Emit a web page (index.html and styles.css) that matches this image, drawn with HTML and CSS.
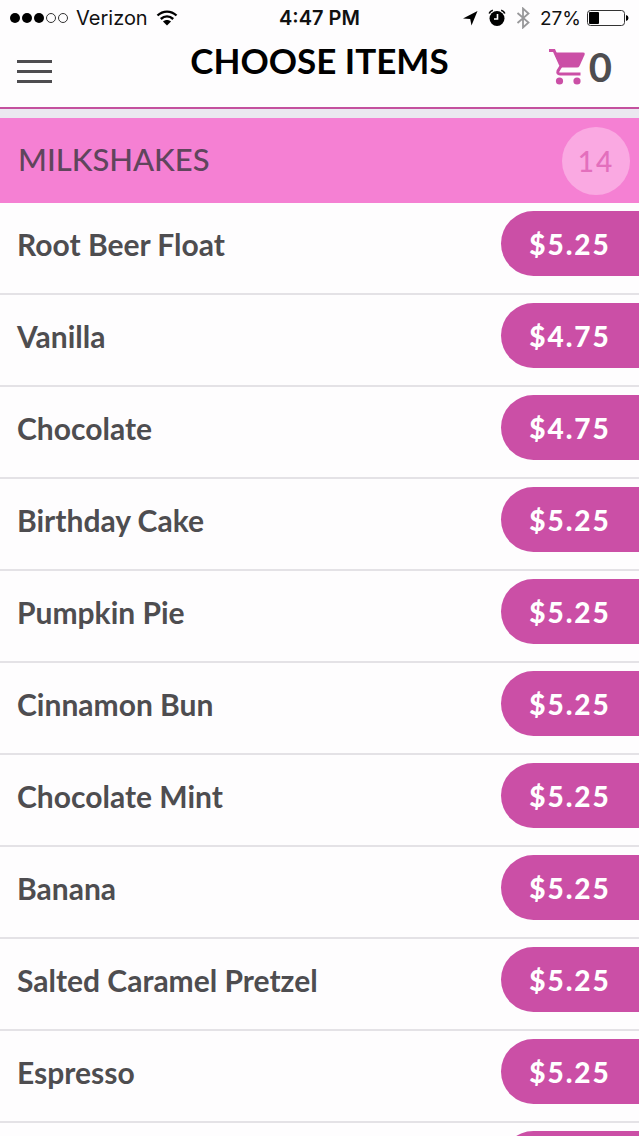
FILE: index.html
```html
<!DOCTYPE html>
<html lang="en">
  <head>
    <meta charset="UTF-8" />
    <meta name="viewport" content="width=device-width, initial-scale=1.0" />
    <title>Choose Items</title>
    <link rel="stylesheet" href="styles.css">
  </head>
  <body>
    <div class="status">
      <div class="status_left">
        <svg class="signal" viewBox="0 0 58 12" aria-hidden="true">
          <circle cx="5" cy="6" r="5" />
          <circle cx="17" cy="6" r="5" />
          <circle cx="29" cy="6" r="5" />
          <circle cx="41" cy="6" r="4.5" class="signal_empty" />
          <circle cx="53" cy="6" r="4.5" class="signal_empty" />
        </svg>
        <span>Verizon</span>
        <svg class="wifi" viewBox="0 0 22 16" aria-hidden="true">
          <path d="M1.5 5.5C7 .3 15 .3 20.500 5.500M4.800 9C8.500 5.600 13.500 5.600 17.200 9" />
          <path class="wifi_dot" d="M7 11.600C9.300 9.600 12.700 9.600 15 11.600L11 15.600Z" />
        </svg>
      </div>
      <div class="status_time">4:47 PM</div>
      <div class="status_right">
        <svg class="arrow" viewBox="0 0 16 16" aria-hidden="true">
          <path d="M15.500 1L9.500 15.500L8.200 9L1 8.500Z" />
        </svg>
        <svg class="alarm" viewBox="0 0 18 18" aria-hidden="true">
          <circle cx="9" cy="9.500" r="7.500" />
          <path class="alarm_bell" d="M1.200 4.600Q2 2 4.800 1.200M16.800 4.600Q16 2 13.200 1.200" />
          <path class="alarm_hand" d="M9.500 5V10H6" />
        </svg>
        <svg class="bluetooth" viewBox="0 0 14 22" aria-hidden="true">
          <path d="M1.500 6L12.500 15.500L7 20.500V1.500L12.500 6.500L1.500 16" />
        </svg>
        <div class="power">
          <span>27%</span>
          <svg class="battery" viewBox="0 0 42 16" aria-hidden="true">
            <rect x=".5" y=".5" width="37" height="15" rx="3" class="battery_case" />
            <rect x="2" y="2" width="10" height="12" rx="1" />
            <path d="M39 5Q41.500 5.500 41.500 8T39 11Z" />
          </svg>
        </div>
      </div>
    </div>

    <header class="header">
      <button class="menu" aria-label="Menu">
        <span></span>
        <span></span>
        <span></span>
      </button>
      <h1>CHOOSE ITEMS</h1>
      <button class="cart" aria-label="Cart, 0 items">
        <svg viewBox="0 0 36 36" aria-hidden="true">
          <path d="M5 3.500H34Q36.500 3.500 35.500 6L30.500 17Q29.800 18.500 28 18.500H12Z" />
          <path class="cart_frame" d="M0 1.500H5L12 17L9 22Q8 25 11 25H31.500" />
          <circle cx="10.500" cy="32" r="3.600" />
          <circle cx="28" cy="32" r="3.600" />
        </svg>
        <span>0</span>
      </button>
    </header>

    <main>
      <div class="category">
        <h2>MILKSHAKES</h2>
        <span class="count">14</span>
      </div>
      <ul class="items">
        <li><span class="name">Root Beer Float</span><button class="price">$5.25</button></li>
        <li><span class="name">Vanilla</span><button class="price">$4.75</button></li>
        <li><span class="name">Chocolate</span><button class="price">$4.75</button></li>
        <li><span class="name">Birthday Cake</span><button class="price">$5.25</button></li>
        <li><span class="name">Pumpkin Pie</span><button class="price">$5.25</button></li>
        <li><span class="name">Cinnamon Bun</span><button class="price">$5.25</button></li>
        <li><span class="name">Chocolate Mint</span><button class="price">$5.25</button></li>
        <li><span class="name">Banana</span><button class="price">$5.25</button></li>
        <li><span class="name">Salted Caramel Pretzel</span><button class="price">$5.25</button></li>
        <li><span class="name">Espresso</span><button class="price">$5.25</button></li>
        <li><span class="name"></span><button class="price" aria-label="Add item"></button></li>
      </ul>
    </main>
  </body>
</html>
```
FILE: styles.css
```css
* {
  box-sizing: border-box;
}
body {
  margin: 0;
  height: 100vh;
  display: flex;
  flex-direction: column;
  background-color: #fefdfe;
  color: #4e4d50;
  font-family: Lato, "Liberation Sans", sans-serif;
}
button {
  border: none;
  padding: 0;
  background: none;
  color: inherit;
  font: inherit;
  cursor: pointer;
}

/* status bar */
.status {
  flex: none;
  display: grid;
  grid-template-columns: 1fr auto 1fr;
  align-items: center;
  height: 36px;
  padding: 0 10px;
  color: #111;
  font-family: Inter, Roboto, sans-serif;
  font-size: 20px;
}
.status_left,
.status_right {
  display: flex;
  align-items: center;
  gap: 8px;
}
.status_right {
  justify-content: flex-end;
  gap: 10px;
}
.status_time {
  font-weight: 600;
}
.signal {
  width: 58px;
  height: 12px;
}
.signal_empty {
  fill: none;
  stroke: #333;
}
.wifi {
  width: 22px;
  height: 16px;
  fill: none;
  stroke: #000;
  stroke-width: 2.4;
}
.wifi_dot {
  fill: #000;
  stroke: none;
}
.arrow {
  width: 16px;
  height: 16px;
}
.alarm {
  width: 18px;
  height: 18px;
}
.alarm_bell {
  fill: none;
  stroke: #000;
  stroke-width: 1.6;
}
.alarm_hand {
  fill: none;
  stroke: #fff;
  stroke-width: 1.6;
}
.bluetooth {
  width: 14px;
  height: 22px;
  fill: none;
  stroke: #98989a;
  stroke-width: 1.8;
}
.power {
  display: flex;
  align-items: center;
  gap: 6px;
  font-size: 19px;
}
.battery {
  width: 42px;
  height: 16px;
}
.battery_case {
  fill: none;
  stroke: #333;
}

/* title bar */
.header {
  flex: none;
  display: grid;
  grid-template-columns: 1fr auto 1fr;
  align-items: start;
  height: 73px;
  padding: 4px 17px 0;
  border-bottom: 2px solid #c4519f;
}
.header h1 {
  margin: 0;
  color: #000;
  font-size: 35px;
  font-weight: 700;
  line-height: 40px;
}
.menu {
  display: flex;
  flex-direction: column;
  gap: 7px;
  width: 35px;
  padding-top: 20px;
}
.menu span {
  height: 3px;
  background-color: #4e4d50;
}
.cart {
  justify-self: end;
  display: flex;
  align-items: center;
  gap: 4px;
  padding: 3px 10px 0 0;
  font-size: 40px;
  font-weight: 700;
  line-height: 48px;
}
.cart svg {
  width: 36px;
  height: 36px;
  fill: #cb4fa6;
}
.cart .cart_frame {
  fill: none;
  stroke: #cb4fa6;
  stroke-width: 3;
}

/* category */
main {
  flex: 1;
  min-height: 0;
  overflow-y: auto;
  scrollbar-width: none;
  border-top: 9px solid #ebe8f0;
}
.category {
  display: flex;
  align-items: center;
  justify-content: space-between;
  height: 85px;
  padding: 0 9px 0 18px;
  background-color: #f580d3;
}
.category h2 {
  margin: 0;
  padding-bottom: 4px;
  color: #60455c;
  font-size: 31px;
  font-weight: 500;
}
.count {
  width: 68px;
  border-radius: 50%;
  background-color: #faa9e2;
  color: #e36fbd;
  font-size: 28px;
  font-weight: 500;
  letter-spacing: 2px;
  line-height: 68px;
  text-align: center;
}

/* items */
.items {
  margin: 0;
  padding: 0;
  list-style: none;
}
.items li {
  display: flex;
  align-items: center;
  justify-content: space-between;
  height: 92px;
  padding: 0 0 9px 17px;
  border-bottom: 2px solid #e4e2e6;
}
.name {
  font-size: 30px;
  font-weight: 700;
}
.price {
  width: 138px;
  height: 65px;
  border-radius: 33px 0 0 33px;
  background-color: #cb4fa6;
  color: #fff;
  font-size: 28px;
  font-weight: 900;
  letter-spacing: 2px;
}
```
